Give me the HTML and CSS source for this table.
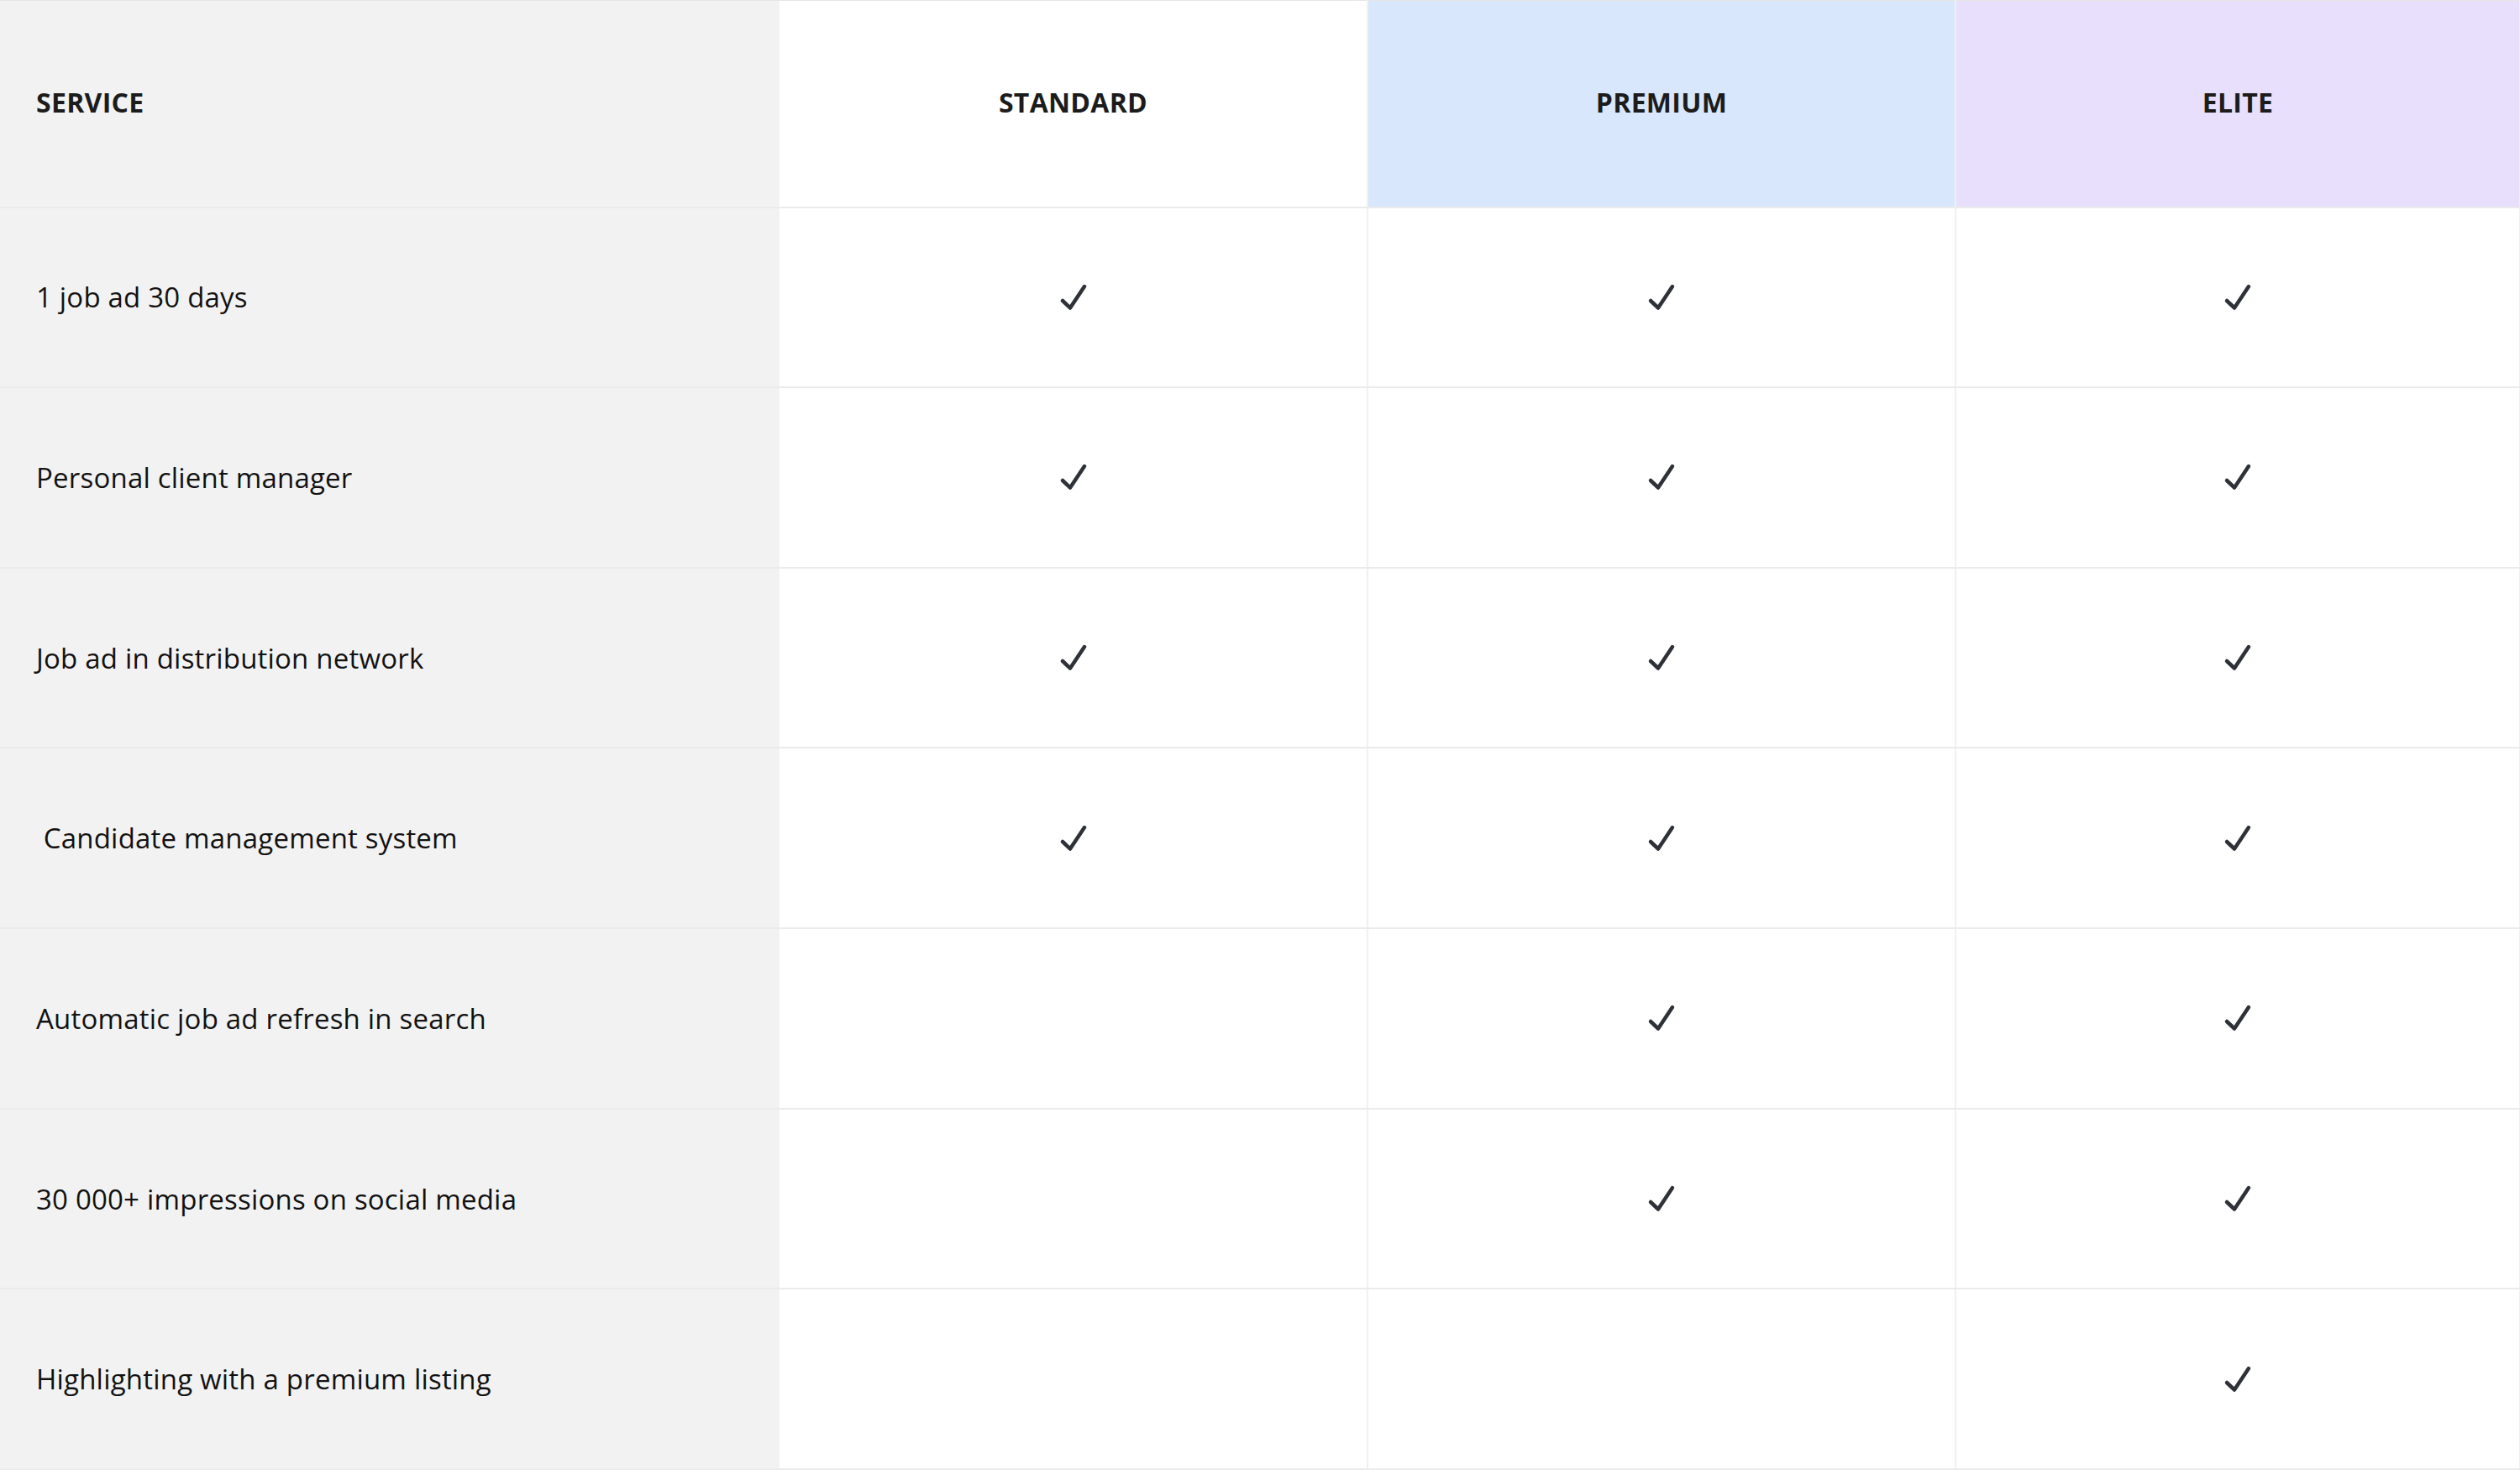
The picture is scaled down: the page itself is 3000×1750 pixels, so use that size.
FILE: index.html
```html
<!DOCTYPE html>
<html lang="en">
<head>
<meta charset="utf-8">
<title>Service comparison</title>
<link rel="stylesheet" href="styles.css">
</head>
<body>
<table class="compare">
  <colgroup>
    <col class="col-service">
    <col class="col-plan">
    <col class="col-plan">
    <col class="col-elite">
  </colgroup>
  <thead>
    <tr class="head-row">
      <th class="service-head">SERVICE</th>
      <th class="plan-head standard">STANDARD</th>
      <th class="plan-head premium">PREMIUM</th>
      <th class="plan-head elite">ELITE</th>
    </tr>
  </thead>
  <tbody>
    <tr>
      <td class="service">1 job ad 30 days</td>
      <td class="mark"><svg class="check" viewBox="0 0 34 34"><polyline points="4,21 13,29.5 30,4"/></svg></td>
      <td class="mark"><svg class="check" viewBox="0 0 34 34"><polyline points="4,21 13,29.5 30,4"/></svg></td>
      <td class="mark"><svg class="check" viewBox="0 0 34 34"><polyline points="4,21 13,29.5 30,4"/></svg></td>
    </tr>
    <tr>
      <td class="service">Personal client manager</td>
      <td class="mark"><svg class="check" viewBox="0 0 34 34"><polyline points="4,21 13,29.5 30,4"/></svg></td>
      <td class="mark"><svg class="check" viewBox="0 0 34 34"><polyline points="4,21 13,29.5 30,4"/></svg></td>
      <td class="mark"><svg class="check" viewBox="0 0 34 34"><polyline points="4,21 13,29.5 30,4"/></svg></td>
    </tr>
    <tr>
      <td class="service">Job ad in distribution network</td>
      <td class="mark"><svg class="check" viewBox="0 0 34 34"><polyline points="4,21 13,29.5 30,4"/></svg></td>
      <td class="mark"><svg class="check" viewBox="0 0 34 34"><polyline points="4,21 13,29.5 30,4"/></svg></td>
      <td class="mark"><svg class="check" viewBox="0 0 34 34"><polyline points="4,21 13,29.5 30,4"/></svg></td>
    </tr>
    <tr>
      <td class="service">&nbsp;Candidate management system</td>
      <td class="mark"><svg class="check" viewBox="0 0 34 34"><polyline points="4,21 13,29.5 30,4"/></svg></td>
      <td class="mark"><svg class="check" viewBox="0 0 34 34"><polyline points="4,21 13,29.5 30,4"/></svg></td>
      <td class="mark"><svg class="check" viewBox="0 0 34 34"><polyline points="4,21 13,29.5 30,4"/></svg></td>
    </tr>
    <tr>
      <td class="service">Automatic job ad refresh in search</td>
      <td class="mark"></td>
      <td class="mark"><svg class="check" viewBox="0 0 34 34"><polyline points="4,21 13,29.5 30,4"/></svg></td>
      <td class="mark"><svg class="check" viewBox="0 0 34 34"><polyline points="4,21 13,29.5 30,4"/></svg></td>
    </tr>
    <tr>
      <td class="service">30 000+ impressions on social media</td>
      <td class="mark"></td>
      <td class="mark"><svg class="check" viewBox="0 0 34 34"><polyline points="4,21 13,29.5 30,4"/></svg></td>
      <td class="mark"><svg class="check" viewBox="0 0 34 34"><polyline points="4,21 13,29.5 30,4"/></svg></td>
    </tr>
    <tr>
      <td class="service">Highlighting with a premium listing</td>
      <td class="mark"></td>
      <td class="mark"></td>
      <td class="mark"><svg class="check" viewBox="0 0 34 34"><polyline points="4,21 13,29.5 30,4"/></svg></td>
    </tr>
  </tbody>
</table>
</body>
</html>
```
FILE: styles.css
```css
html, body {
  margin: 0;
  padding: 0;
  background: #ffffff;
}

body {
  font-family: "Open Sans", "Noto Sans", "Liberation Sans", sans-serif;
  color: #141414;
}

.compare {
  width: 3000px;
  height: 1750px;
  border-collapse: collapse;
  table-layout: fixed;
  border-top: 1px solid #e6e6e6;
}

.col-service { width: 928px; }
.col-plan { width: 700px; }
.col-elite { width: 672px; }

.head-row {
  height: 246px;
}

.compare th,
.compare td {
  padding: 0;
  border-bottom: 2px solid #ebebeb;
  border-right: 2px solid #f0f0f0;
  vertical-align: middle;
}

.compare tbody tr {
  height: 214px;
}

.service-head,
.plan-head {
  font-size: 32px;
  font-weight: 700;
  letter-spacing: 0.3px;
  color: #1c1c1c;
  padding-bottom: 4px !important;
}

.service-head {
  text-align: left;
  padding-left: 43px !important;
  background: #f2f2f2;
  border-right: none !important;
}

.plan-head {
  text-align: center;
}

.standard { background: #ffffff; }
.premium { background: #d9e7fd; }
.elite { background: #e8dffd; }

.service {
  font-size: 33px;
  font-weight: 400;
  letter-spacing: 0.2px;
  padding-left: 43px !important;
  background: #f2f2f2;
  border-right: none !important;
  color: #121212;
}

.mark {
  text-align: center;
  background: #ffffff;
}

.check {
  width: 34px;
  height: 34px;
  display: inline-block;
  vertical-align: middle;
}

.check polyline {
  fill: none;
  stroke: #2e3137;
  stroke-width: 4.5;
  stroke-linecap: round;
  stroke-linejoin: round;
}
```
